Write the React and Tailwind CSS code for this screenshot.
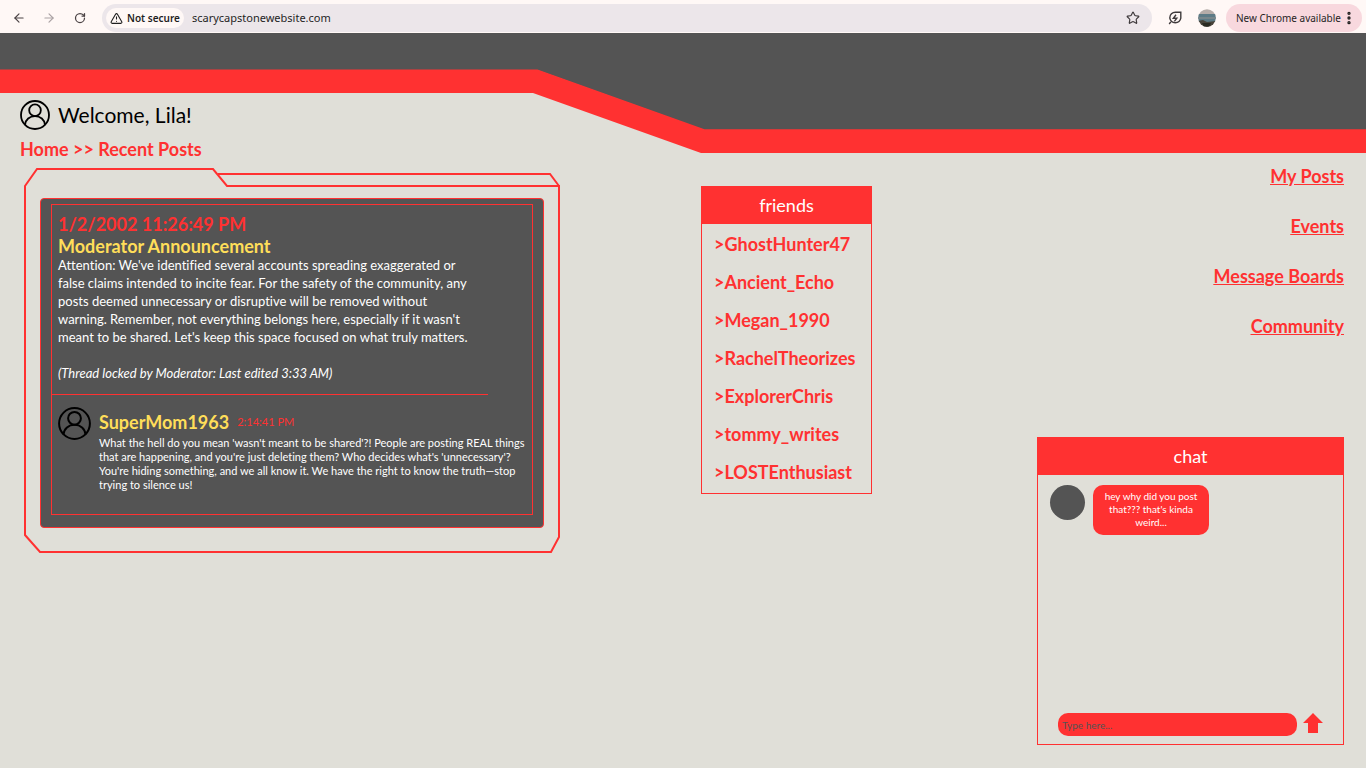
import React from "react";
import { ArrowLeft, ArrowRight, RotateCw, Star, TriangleAlert, EllipsisVertical } from "lucide-react";

const friends = [
  "GhostHunter47",
  "Ancient_Echo",
  "Megan_1990",
  "RachelTheorizes",
  "ExplorerChris",
  "tommy_writes",
  "LOSTEnthusiast",
];

const links = ["My Posts", "Events", "Message Boards", "Community"];

const UserIcon = ({ className }) => (
  <svg viewBox="0 0 33 33" className={className} fill="none" stroke="black" strokeWidth="2" aria-hidden="true">
    <circle cx="16.5" cy="16.5" r="15.4" />
    <circle cx="16.5" cy="11.3" r="6.4" />
    <path d="M5.4 27.6C6 21.5 10.6 17.8 16.5 17.8S27 21.5 27.6 27.6" />
  </svg>
);

const BrowserBar = () => (
  <div className="flex h-[33px] items-center bg-[#fff8f6] pt-1 pr-1 pb-px pl-3 font-['Noto_Sans',sans-serif] text-[#1f1f1f]">
    <button type="button" aria-label="Back" className="text-[#4b4345]">
      <ArrowLeft size={14} />
    </button>
    <button type="button" aria-label="Forward" className="ml-4 text-[#aaa2a4]">
      <ArrowRight size={14} />
    </button>
    <button type="button" aria-label="Reload" className="ml-[18px] text-[#4b4345]">
      <RotateCw size={12} strokeWidth={2.5} />
    </button>

    {/* Address bar */}
    <div className="ml-4 flex h-7 flex-1 items-center rounded-full bg-[#ece6ea] pr-3 pl-1">
      <button type="button" className="flex h-5 items-center gap-1 rounded-full bg-[#fff8f6] px-1 text-[10px] font-semibold">
        <TriangleAlert size={13} />
        Not secure
      </button>
      <input
        type="text"
        aria-label="Address"
        defaultValue="scarycapstonewebsite.com"
        className="ml-2 min-w-0 flex-1 bg-transparent text-[11px] outline-none"
      />
      <button type="button" aria-label="Bookmark" className="text-[#3f3a3c]">
        <Star size={14} />
      </button>
    </div>

    <button type="button" aria-label="Energy saver" className="ml-4">
      <svg viewBox="0 0 14 14" className="size-[14px]" fill="none" stroke="#3f3a3c" strokeWidth="1.4" aria-hidden="true">
        <path d="M12.8 1.2H7.4A5.6 5.6 0 0 0 1.8 6.8v.4a5.6 5.6 0 0 0 11 0zM2.8 10.8 1.2 13" />
        <path d="M8 3.8 5.4 7.2h3.4L6.4 10.4" />
      </svg>
    </button>
    <button type="button" aria-label="Profile" className="ml-4">
      <svg viewBox="0 0 18 18" className="size-[18px]" aria-hidden="true">
        <clipPath id="avatar">
          <circle cx="9" cy="9" r="8.8" />
        </clipPath>
        <g clipPath="url(#avatar)">
          <rect width="18" height="6" fill="#b5aca8" />
          <rect y="5" width="18" height="8" fill="#5d7b86" />
          <rect y="8" width="18" height="2" fill="#78868a" />
          <path d="M0 12 5 11l4 2 9-1v6H0z" fill="#47433a" />
          <path d="M4 14h9l-2 4H6z" fill="#292a22" />
        </g>
      </svg>
    </button>
    <button type="button" className="ml-[10px] flex h-7 items-center rounded-full bg-[#f8d8de] pr-[5px] pl-[10px] text-[10px]">
      New Chrome available
      <EllipsisVertical size={16} strokeWidth={3} />
    </button>
  </div>
);

const Banner = () => (
  <svg viewBox="0 0 1366 120" preserveAspectRatio="none" className="col-start-1 row-start-1 h-[120px] w-full" aria-hidden="true">
    <path d="M0 0H1366V97H704L537 37H0z" fill="#545454" />
    <path d="M0 36.500H537.500L704.500 96.300H1366V120H701L533 60H0z" fill="#ff3131" />
  </svg>
);

const Post = () => (
  <article className="grid">
    {/* Folder outline */}
    <svg
      viewBox="0 0 540 388"
      preserveAspectRatio="none"
      className="col-start-1 row-start-1 h-full w-full"
      fill="none"
      stroke="#ff3131"
      strokeWidth="2"
      aria-hidden="true"
    >
      <path d="M5 19 17 2H193L207 19H539V370L531 385H20L5 368z" />
      <path d="M198 7H530L539 19" />
    </svg>

    <div className="col-start-1 row-start-1 mt-[31px] mr-4 mb-[27px] ml-5 rounded-sm border border-[#ff3131] bg-[#545454] px-[10px] pt-[5px] pb-3">
      <div className="min-h-[311px] border border-[#ff3131] text-white">
        <div className="px-[6px] pt-[7px]">
          <h2 className="text-[18px] leading-6 font-bold text-[#ff3131]">1/2/2002 11:26:49 PM</h2>
          <h3 className="text-[18px] leading-5 font-bold text-[#ffde59]">Moderator Announcement</h3>
          <p className="w-[416px] text-[13px] leading-[18px]">
            Attention: We've identified several accounts spreading exaggerated or false claims intended to incite fear. For the
            safety of the community, any posts deemed unnecessary or disruptive will be removed without warning. Remember, not
            everything belongs here, especially if it wasn't meant to be shared. Let's keep this space focused on what truly
            matters.
          </p>
          <p className="mt-[18px] text-[13px] leading-[18px] italic">(Thread locked by Moderator: Last edited 3:33 AM)</p>
        </div>
        <hr className="mt-3 mr-11 border-[#ff3131]" />

        {/* Reply */}
        <div className="flex gap-2 pt-3 pl-[6px]">
          <UserIcon className="size-[33px] shrink-0" />
          <div className="pt-1">
            <div className="flex items-center gap-2">
              <h4 className="text-[18px] leading-[22px] font-bold text-[#ffde59]">SuperMom1963</h4>
              <time className="text-[11px] text-[#ff3131]">2:14:41 PM</time>
            </div>
            <p className="w-[431px] pt-[3px] text-[11px] leading-[14px]">
              What the hell do you mean 'wasn't meant to be shared'?! People are posting REAL things that are happening, and
              you're just deleting them? Who decides what's 'unnecessary'? You're hiding something, and we all know it. We have
              the right to know the truth—stop trying to silence us!
            </p>
          </div>
        </div>
      </div>
    </div>
  </article>
);

const Friends = () => (
  <aside className="mt-[153px] ml-[141px] w-[171px] self-start border border-[#ff3131]">
    <h2 className="bg-[#ff3131] pb-px text-center text-[18px] leading-9 text-white">friends</h2>
    <ul className="pt-px pb-[2px] pl-3 text-[18px] leading-[38px] font-bold text-[#ff3131]">
      {friends.map((name) => (
        <li key={name}>
          <a href="#">&gt;{name}</a>
        </li>
      ))}
    </ul>
  </aside>
);

const Chat = () => (
  <section className="flex min-h-[308px] flex-col border border-[#ff3131]">
    <h2 className="bg-[#ff3131] pb-px text-center text-[18px] leading-9 text-white">chat</h2>
    <div className="flex flex-1 items-start gap-2 px-3 pt-[10px]">
      <div className="size-[35px] rounded-full bg-[#545454]" />
      <p className="w-[116px] rounded-[10px] bg-[#ff3131] px-[10px] pt-[5px] pb-[6px] text-center text-[10px] leading-[13px] text-white">
        hey why did you post that??? that's kinda weird...
      </p>
    </div>
    <form className="flex items-start gap-[6px] pr-5 pb-2 pl-5">
      <input
        type="text"
        aria-label="Message"
        placeholder="Type here..."
        className="h-[23px] min-w-0 flex-1 rounded-[10px] bg-[#ff3131] px-1 text-[10px] text-[#545454] outline-none placeholder:text-[#545454]"
      />
      <button type="button" aria-label="Send">
        <svg viewBox="0 0 20 20" className="size-5" fill="#ff3131" aria-hidden="true">
          <path d="M10 0 20 10H15V20H5V10H0z" />
        </svg>
      </button>
    </form>
  </section>
);

const App = () => {
  return (
    <div className="flex min-h-screen flex-col bg-[#e0dfd8] font-[Lato,sans-serif] [font-variant-ligatures:none]">
      <BrowserBar />
      <div className="grid flex-1 grid-rows-[1fr]">
        <Banner />
        <main className="col-start-1 row-start-1 grid grid-cols-[540px_1fr_307px] pr-[22px] pb-[23px] pl-5">
          <div className="pt-[67px]">
            <h1 className="flex items-center gap-2 text-[21px] leading-7">
              <UserIcon className="size-[30px]" />
              Welcome, Lila!
            </h1>
            <nav className="mt-[7px] mb-[6px] text-[18px] leading-6 font-bold text-[#ff3131]">
              <a href="#">Home</a> &gt;&gt; <a href="#">Recent Posts</a>
            </nav>
            <Post />
          </div>

          <Friends />

          <div className="flex flex-col justify-between pt-[131px]">
            <nav className="flex flex-col items-end gap-[26px] text-[18px] leading-6 font-bold text-[#ff3131] underline">
              {links.map((link) => (
                <a key={link} href="#">{link}</a>
              ))}
            </nav>
            <Chat />
          </div>
        </main>
      </div>
    </div>
  );
};

export default App;
